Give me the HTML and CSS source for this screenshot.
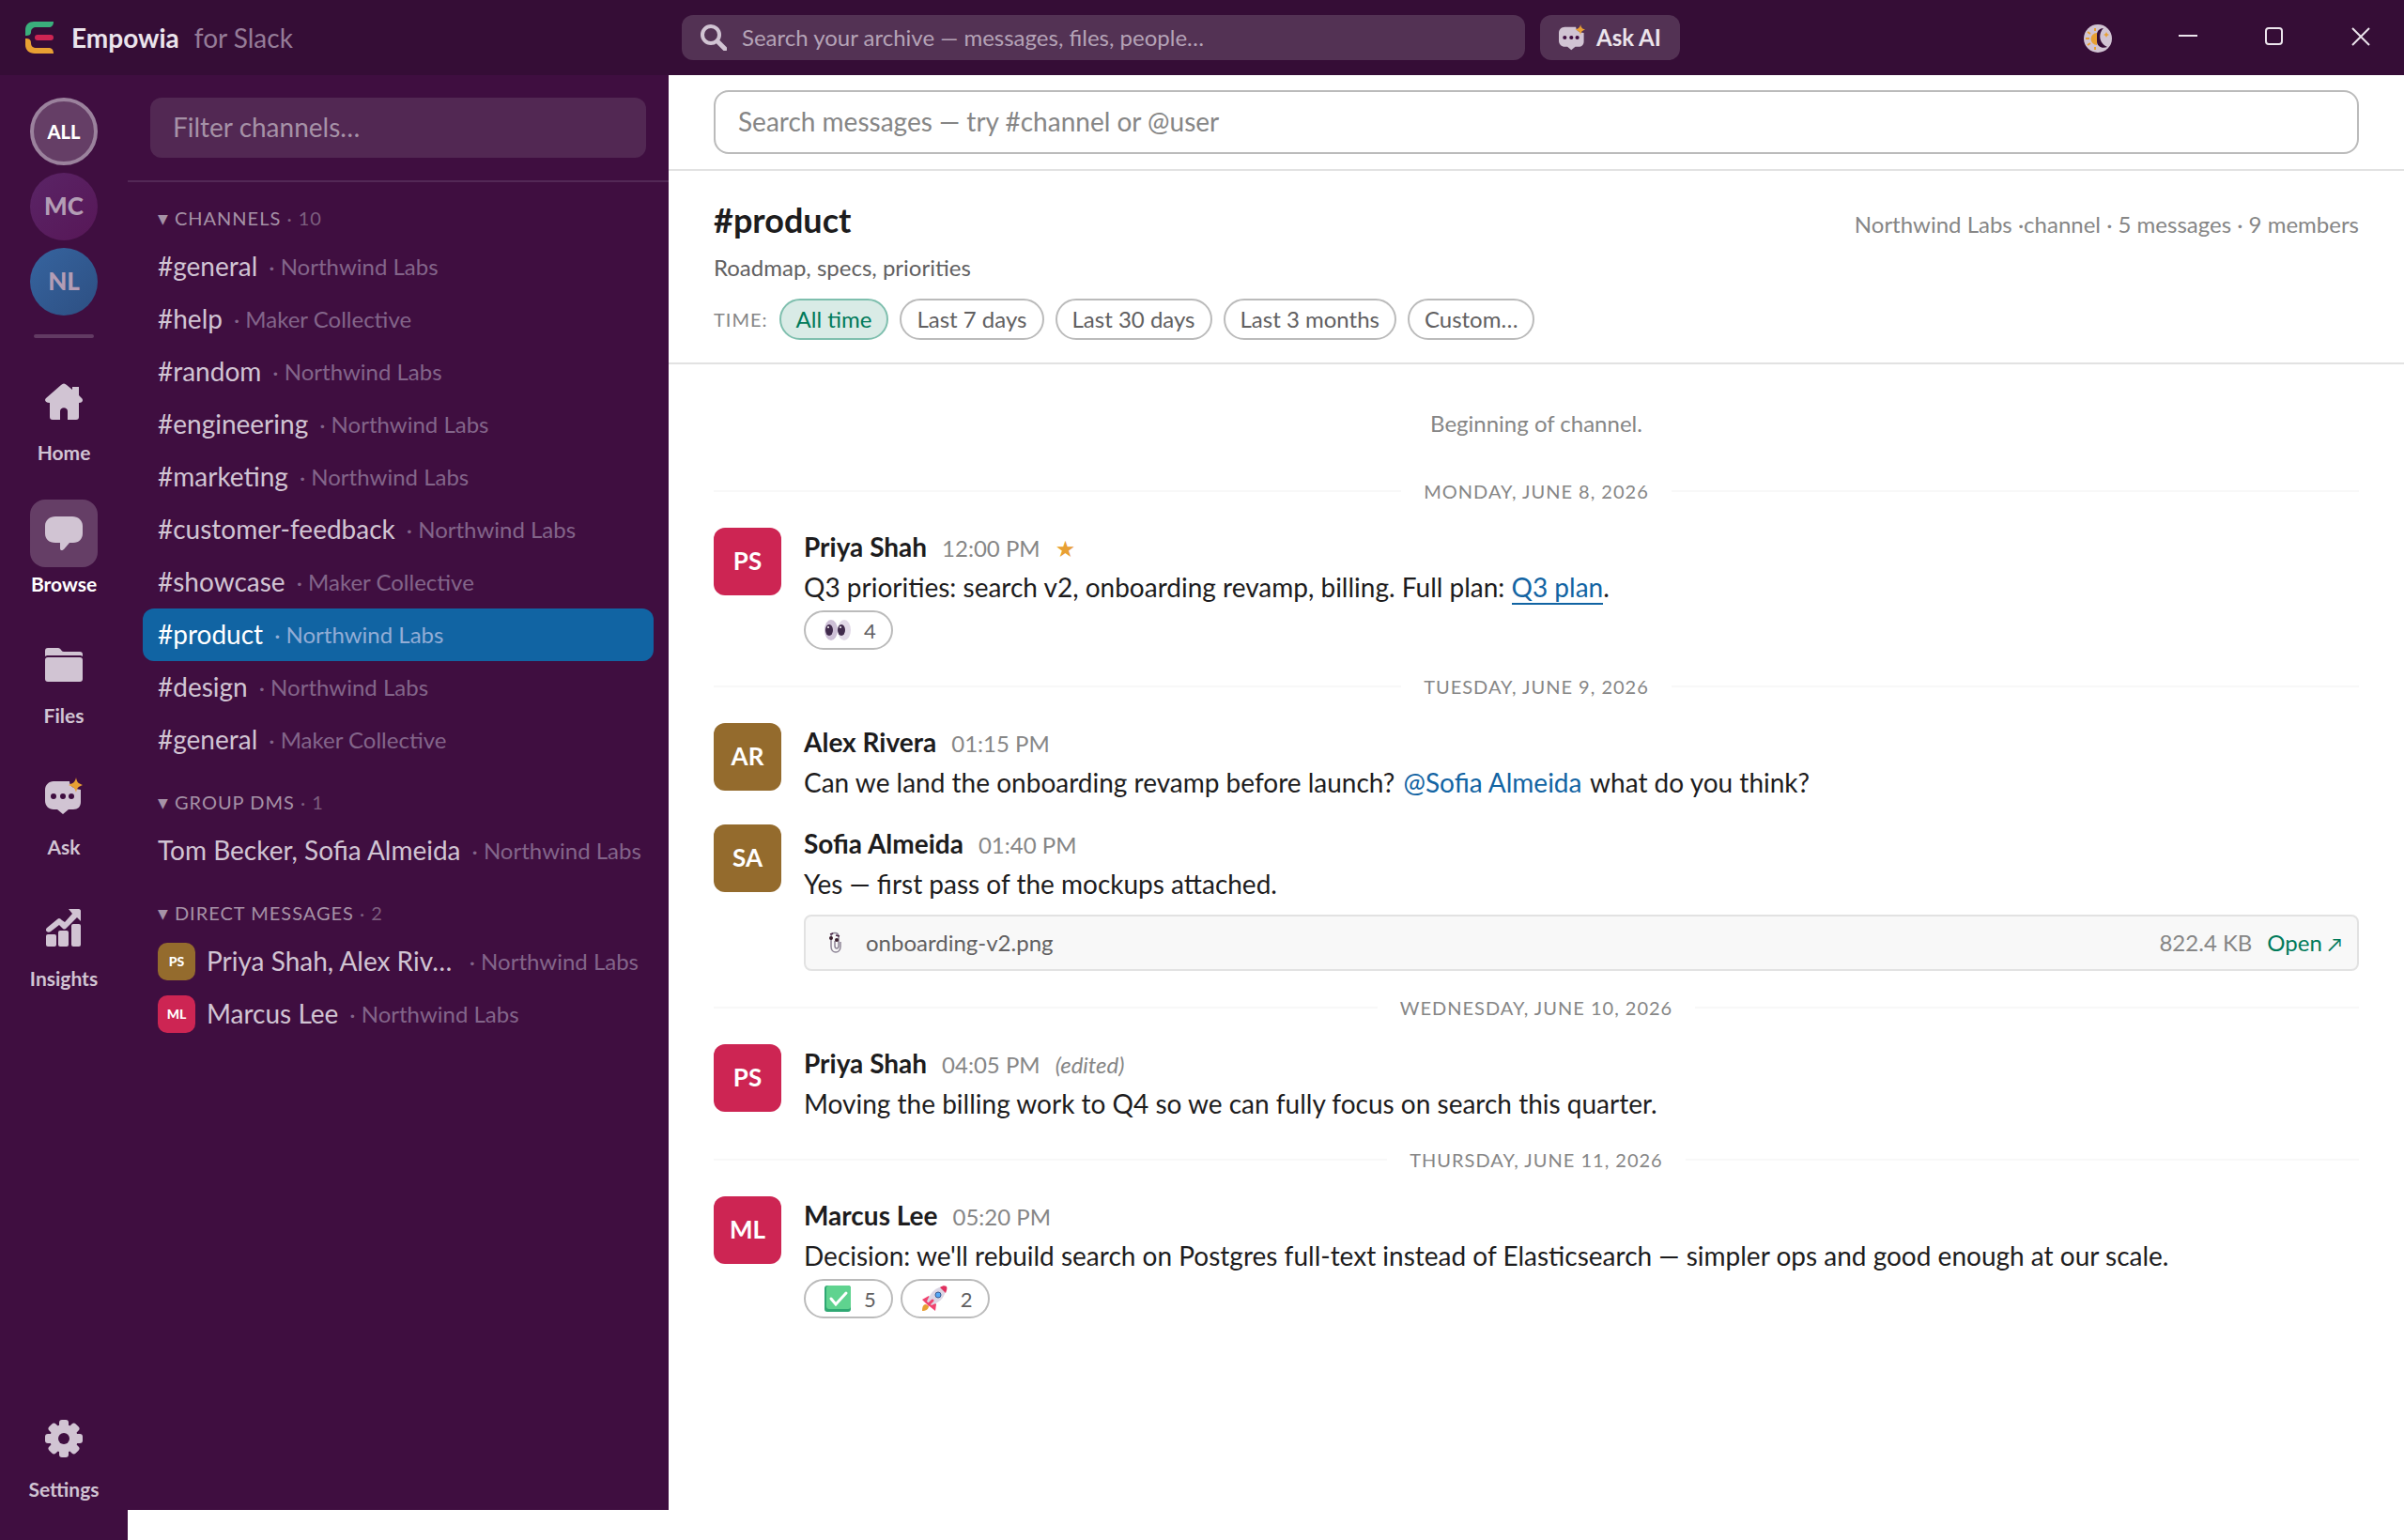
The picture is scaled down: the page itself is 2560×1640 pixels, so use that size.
FILE: index.html
```html
<!DOCTYPE html>
<html lang="en">
<head>
    <meta charset="UTF-8">
    <meta name="viewport" content="width=device-width, initial-scale=1.0">
    <title>Empowia for Slack</title>
    <link rel="stylesheet" href="styles.css">
</head>
<body>

    <!-- Shared icons -->
    <svg class="sprite" aria-hidden="true">
        <symbol id="icon-ask" viewBox="0 0 40 40">
            <path fill="currentColor" d="M9 4h17c0 5 4 8 12 9v13c0 5-3 8-8 8h-5l-6 5-6-5H9c-5 0-9-4-9-9V13c0-5 4-9 9-9z"/>
            <circle class="dot" cx="9" cy="20" r="3"/>
            <circle class="dot" cx="19" cy="20" r="3"/>
            <circle class="dot" cx="28" cy="20" r="3"/>
            <path fill="#e8a033" d="M33 0c1 5 2 6 7 8-5 2-6 3-7 8-1-5-3-6-8-8 5-2 7-3 8-8z"/>
        </symbol>
    </svg>

    <header class="titlebar">
        <div class="brand">
            <svg class="logo" viewBox="0 0 30 34" aria-hidden="true">
                <path fill="#3aaf7c" d="M0 15V9c0-6 4-9 9-9h21c0 4-2 6-5 6H12c-4 0-6 2-6 5 0 3-2 4-6 4z"/>
                <rect fill="#cd2553" x="10" y="14" width="20" height="6" rx="3"/>
                <path fill="#e8a033" d="M0 18c4 0 6 1 6 5 0 3 2 5 6 5h13c3 0 5 2 5 6H10c-6 0-10-4-10-9z"/>
            </svg>
            <strong>Empowia</strong>
            <span>for Slack</span>
        </div>
        <div class="top-actions">
            <button type="button" class="archive-search">
                <svg viewBox="0 0 28 28" aria-hidden="true">
                    <circle cx="11" cy="11" r="9" fill="none" stroke="currentColor" stroke-width="4"/>
                    <path d="M18 18l8 8" stroke="currentColor" stroke-width="5" stroke-linecap="round"/>
                </svg>
                <span>Search your archive — messages, files, people…</span>
            </button>
            <button type="button" class="ask-ai">
                <svg aria-hidden="true"><use href="#icon-ask"/></svg>
                <span>Ask AI</span>
            </button>
        </div>
        <div class="window-controls">
            <button type="button" class="theme" aria-label="Toggle theme">
                <svg viewBox="0 0 30 30">
                    <circle cx="15" cy="15" r="15" fill="#d1c4d3"/>
                    <path fill="#e8a033" d="M14 9v13a6 6 0 0 1 0-13z"/>
                    <path stroke="#e8a033" stroke-width="2" d="M12 4v3M12 24v3M2 15h4M4 8l3 2M4 22l3-2"/>
                    <path fill="#350d36" d="M21 4c-5 5-6 15 4 20-5 2-11 0-11-6V11c0-4 3-7 7-7z"/>
                    <path fill="#e8a033" d="M24 8l1 2 2 1-2 1-1 2-1-2-2-1 2-1z"/>
                </svg>
            </button>
            <button type="button" aria-label="Minimize">
                <svg viewBox="0 0 20 20"><path stroke="currentColor" stroke-width="2" d="M0 9h20"/></svg>
            </button>
            <button type="button" aria-label="Maximize">
                <svg viewBox="0 0 20 20"><rect x="1" y="1" width="17" height="17" rx="3" fill="none" stroke="currentColor" stroke-width="2"/></svg>
            </button>
            <button type="button" aria-label="Close">
                <svg viewBox="0 0 20 20"><path stroke="currentColor" stroke-width="2" d="M1 1l18 18M19 1L1 19"/></svg>
            </button>
        </div>
    </header>

    <div class="app">
        <nav class="rail">
            <button type="button" class="workspace all">ALL</button>
            <button type="button" class="workspace mc">MC</button>
            <button type="button" class="workspace nl">NL</button>
            <hr>
            <a href="#home" class="rail-item">
                <span class="rail-icon"><svg viewBox="0 0 40 40"><path fill="currentColor" d="M17 2c2-2 4-2 6 0l6 5V4h7v9l3 3c2 2 1 5-3 5v15c0 2-1 3-3 3h-9V30c0-5-8-5-8 0v9H8c-2 0-3-1-3-3V21c-5 0-6-3-4-5z"/></svg></span>
                Home
            </a>
            <a href="#browse" class="rail-item active">
                <span class="rail-icon"><svg viewBox="0 0 40 40"><path fill="currentColor" d="M11 2h18c6 0 11 4 11 10v8c0 6-4 10-10 10h-4l-6 7c-1 1-4 2-4-1v-6h-5C4 30 0 26 0 20v-8C0 6 5 2 11 2z"/></svg></span>
                Browse
            </a>
            <a href="#files" class="rail-item">
                <span class="rail-icon"><svg viewBox="0 0 40 40"><path fill="currentColor" d="M0 11V5c0-2 1-3 3-3h11c3 0 3 4 6 4h17c2 0 3 1 3 3v2c-1-1-2-1-3-1H3c-1 0-2 0-3 1z"/><path fill="currentColor" d="M3 12h34c2 0 3 1 3 3v20c0 2-1 3-3 3H3c-2 0-3-1-3-3V15c0-2 1-3 3-3z"/></svg></span>
                Files
            </a>
            <a href="#ask" class="rail-item">
                <span class="rail-icon"><svg><use href="#icon-ask"/></svg></span>
                Ask
            </a>
            <a href="#insights" class="rail-item">
                <span class="rail-icon"><svg viewBox="0 0 40 40"><g fill="currentColor"><rect x="1" y="27" width="11" height="13" rx="2"/><rect x="14" y="23" width="11" height="17" rx="2"/><rect x="28" y="16" width="10" height="24" rx="2"/><path d="M25 0h11c1 0 2 1 2 2v11l-4-4-11 11c-2 2-3 2-5 0l-3-3-9 7c-3 2-7-1-4-4L13 11c2-2 3-1 5 1l3 2 8-9z"/></g></svg></span>
                Insights
            </a>
            <a href="#settings" class="rail-item settings">
                <span class="rail-icon"><svg viewBox="0 0 40 40"><g fill="currentColor"><rect x="15" y="0" width="10" height="40" rx="3"/><rect x="15" y="0" width="10" height="40" rx="3" transform="rotate(45 20 20)"/><rect x="15" y="0" width="10" height="40" rx="3" transform="rotate(90 20 20)"/><rect x="15" y="0" width="10" height="40" rx="3" transform="rotate(135 20 20)"/><circle cx="20" cy="20" r="15"/></g><circle cx="20" cy="20" r="6" fill="#3f0e40"/></svg></span>
                Settings
            </a>
        </nav>

        <aside class="sidebar">
            <div class="filter">
                <input type="text" placeholder="Filter channels…" aria-label="Filter channels">
            </div>
            <h2><i>▼</i> Channels <small>· 10</small></h2>
            <a href="#c1" class="channel"><b>#general</b><span>· Northwind Labs</span></a>
            <a href="#c2" class="channel"><b>#help</b><span>· Maker Collective</span></a>
            <a href="#c3" class="channel"><b>#random</b><span>· Northwind Labs</span></a>
            <a href="#c4" class="channel"><b>#engineering</b><span>· Northwind Labs</span></a>
            <a href="#c5" class="channel"><b>#marketing</b><span>· Northwind Labs</span></a>
            <a href="#c6" class="channel"><b>#customer-feedback</b><span>· Northwind Labs</span></a>
            <a href="#c7" class="channel"><b>#showcase</b><span>· Maker Collective</span></a>
            <a href="#c8" class="channel selected"><b>#product</b><span>· Northwind Labs</span></a>
            <a href="#c9" class="channel"><b>#design</b><span>· Northwind Labs</span></a>
            <a href="#c10" class="channel"><b>#general</b><span>· Maker Collective</span></a>
            <h2><i>▼</i> Group DMs <small>· 1</small></h2>
            <a href="#g1" class="channel"><b>Tom Becker, Sofia Almeida</b><span>· Northwind Labs</span></a>
            <h2><i>▼</i> Direct messages <small>· 2</small></h2>
            <a href="#d1" class="channel long"><em class="mini brown">PS</em><b>Priya Shah, Alex Riv…</b><span>· Northwind Labs</span></a>
            <a href="#d2" class="channel"><em class="mini red">ML</em><b>Marcus Lee</b><span>· Northwind Labs</span></a>
        </aside>

        <main>
            <div class="message-search">
                <input type="text" placeholder="Search messages — try #channel or @user" aria-label="Search messages">
            </div>

            <section class="channel-head">
                <div class="title-row">
                    <h1>#product</h1>
                    <span>Northwind Labs ·channel · 5 messages · 9 members</span>
                </div>
                <p>Roadmap, specs, priorities</p>
                <div class="times">
                    <span>TIME:</span>
                    <button type="button" class="on">All time</button>
                    <button type="button">Last 7 days</button>
                    <button type="button">Last 30 days</button>
                    <button type="button">Last 3 months</button>
                    <button type="button">Custom…</button>
                </div>
            </section>

            <section class="messages">
                <p class="beginning">Beginning of channel.</p>

                <div class="day">Monday, June 8, 2026</div>
                <article class="message">
                    <div class="avatar red">PS</div>
                    <div class="body">
                        <div class="meta"><strong>Priya Shah</strong><time>12:00 PM</time><span class="star">★</span></div>
                        <p>Q3 priorities: search v2, onboarding revamp, billing. Full plan: <a href="#plan" class="link">Q3 plan</a>.</p>
                        <div class="reactions">
                            <button type="button">
                                <svg viewBox="0 0 28 28" aria-hidden="true"><ellipse cx="7" cy="14" rx="7" ry="11" fill="#cdbfd6"/><ellipse cx="21" cy="14" rx="7" ry="11" fill="#e2dae8"/><ellipse cx="5" cy="14" rx="4" ry="6" fill="#402a4c"/><ellipse cx="18" cy="14" rx="4" ry="6" fill="#402a4c"/><circle cx="4" cy="11" r="1" fill="#fff"/><circle cx="17" cy="11" r="1" fill="#fff"/></svg>
                                4
                            </button>
                        </div>
                    </div>
                </article>

                <div class="day">Tuesday, June 9, 2026</div>
                <article class="message">
                    <div class="avatar brown">AR</div>
                    <div class="body">
                        <div class="meta"><strong>Alex Rivera</strong><time>01:15 PM</time></div>
                        <p>Can we land the onboarding revamp before launch? <a href="#sofia" class="mention">@Sofia Almeida</a> what do you think?</p>
                    </div>
                </article>
                <article class="message">
                    <div class="avatar brown">SA</div>
                    <div class="body">
                        <div class="meta"><strong>Sofia Almeida</strong><time>01:40 PM</time></div>
                        <p>Yes — first pass of the mockups attached.</p>
                        <div class="file">
                            <svg viewBox="0 0 16 24" aria-hidden="true"><path fill="none" stroke="#8d8495" stroke-width="1.5" d="M3 6v10c0 8 10 8 10 0v-5M3 6c0-6 8-6 8 0v9c0 4-4 4-4 0v-5"/><circle cx="3" cy="7" r="2" fill="#3b1f2e"/><circle cx="9" cy="9" r="2" fill="#3b1f2e"/><path stroke="#4a2545" stroke-width="1.5" d="M2 3l3-1M8 4l4 1"/></svg>
                            <span class="file-name">onboarding-v2.png</span>
                            <span class="file-size">822.4 KB</span>
                            <a href="#open">Open <i>↗</i></a>
                        </div>
                    </div>
                </article>

                <div class="day">Wednesday, June 10, 2026</div>
                <article class="message">
                    <div class="avatar red">PS</div>
                    <div class="body">
                        <div class="meta"><strong>Priya Shah</strong><time>04:05 PM</time><em>(edited)</em></div>
                        <p>Moving the billing work to Q4 so we can fully focus on search this quarter.</p>
                    </div>
                </article>

                <div class="day">Thursday, June 11, 2026</div>
                <article class="message">
                    <div class="avatar red">ML</div>
                    <div class="body">
                        <div class="meta"><strong>Marcus Lee</strong><time>05:20 PM</time></div>
                        <p>Decision: we'll rebuild search on Postgres full-text instead of Elasticsearch — simpler ops and good enough at our scale.</p>
                        <div class="reactions">
                            <button type="button">
                                <svg viewBox="0 0 28 28" aria-hidden="true"><rect width="28" height="28" rx="3" fill="#2fa873"/><rect x="2" width="26" height="25" rx="3" fill="#5fd38f"/><path d="M7 14l5 6L23 8" fill="none" stroke="#fff" stroke-width="3" stroke-linecap="round"/></svg>
                                5
                            </button>
                            <button type="button">
                                <svg viewBox="0 0 28 28" aria-hidden="true"><path fill="#e8a033" d="M1 27c0-4 1-7 4-7l3 2c0 3-3 5-7 5z"/><path fill="#f0436f" d="M1 15l7-4 8 9-1 7-5-4-5-4z"/><path fill="#dcd6e4" d="M6 17C9 9 14 3 22 1l4 5c-2 8-7 12-15 15z"/><path fill="#e0305e" d="M20 2c3-2 5-2 7-1 1 2 0 4-1 7z"/><circle cx="18" cy="10" r="3" fill="#56a8f5" stroke="#35588f"/><path stroke="#f0436f" stroke-width="3" stroke-linecap="round" d="M8 20l4-4"/></svg>
                                2
                            </button>
                        </div>
                    </div>
                </article>
            </section>
        </main>
    </div>

</body>
</html>
```
FILE: styles.css
```css
* {
    box-sizing: border-box;
}
body {
    margin: 0;
    min-height: 100vh;
    display: flex;
    flex-direction: column;
    font-family: Lato, sans-serif;
    font-size: 28px;
    color: #1d1c1d;
    background-color: #fff;
}
button, input {
    font-family: inherit;
}
button {
    cursor: pointer;
}
a {
    text-decoration: none;
}
p, h1, h2 {
    margin: 0;
}
.sprite {
    display: none;
}

/* Title bar */
.titlebar {
    height: 80px;
    display: grid;
    grid-template-columns: 712px auto 1fr;
    align-items: center;
    background-color: #350d36;
    color: #d1c4d3;
}
.brand {
    display: flex;
    align-items: center;
    padding-left: 27px;
    color: #957c98;
}
.logo {
    width: 30px;
    height: 34px;
    margin-right: 19px;
}
.brand strong {
    margin-right: 16px;
    color: #ebe4ec;
}
.top-actions {
    display: flex;
    gap: 16px;
    padding-left: 14px;
}
.top-actions button {
    height: 48px;
    display: flex;
    align-items: center;
    border: none;
    border-radius: 12px;
    background-color: #533254;
    color: #b5a3b7;
    font-size: 24px;
}
.top-actions span {
    padding-bottom: 2px;
}
.top-actions svg {
    width: 28px;
    height: 28px;
    color: #d1c4d3;
}
.archive-search {
    width: 898px;
    gap: 16px;
    padding: 0 20px;
}
.top-actions .ask-ai {
    gap: 12px;
    padding: 0 20px;
    color: #ebe4ec;
    font-weight: bold;
}
.dot {
    fill: #3f0e40;
}
.window-controls {
    display: flex;
    justify-content: flex-end;
    align-items: center;
}
.window-controls button {
    width: 92px;
    height: 80px;
    border: none;
    padding: 0;
    background: none;
    color: #ebe4ec;
}
.window-controls svg {
    width: 20px;
    height: 20px;
}
.window-controls .theme {
    margin-right: 4px;
    padding-top: 4px;
}
.window-controls .theme svg {
    width: 30px;
    height: 30px;
}

/* Layout under the title bar */
.app {
    flex: 1;
    display: grid;
    grid-template-columns: 136px 576px 1fr;
}

/* Rail */
.rail {
    display: flex;
    flex-direction: column;
    align-items: center;
    padding: 24px 0 40px;
    background-color: #3f0e40;
}
.workspace {
    width: 72px;
    height: 72px;
    margin-bottom: 8px;
    padding: 0 0 2px;
    border: none;
    border-radius: 50%;
    color: #b39db5;
    font-size: 26px;
    font-weight: 900;
}
.workspace.all {
    padding: 0;
    border: 4px solid #9b829d;
    background-color: #653e66;
    color: #fff;
    font-size: 20px;
}
.workspace.mc {
    background: linear-gradient(135deg, #5a2466, #571757);
}
.workspace.nl {
    background: linear-gradient(135deg, #36649f, #2d4f82);
}
.rail hr {
    width: 64px;
    height: 4px;
    margin: 12px 0 32px;
    border: none;
    border-radius: 2px;
    background-color: #623a63;
}
.rail-item {
    display: flex;
    flex-direction: column;
    align-items: center;
    gap: 4px;
    margin-bottom: 36px;
    color: #d1c4d3;
    font-size: 21px;
    font-weight: bold;
    line-height: 28px;
}
.rail-icon {
    width: 72px;
    height: 72px;
    display: flex;
    align-items: center;
    justify-content: center;
    border-radius: 16px;
}
.rail-icon svg {
    width: 40px;
    height: 40px;
}
.rail-item.active {
    color: #fff;
}
.active .rail-icon {
    background-color: #653e66;
    color: #d1c4d3;
}
.rail-item.settings {
    margin: auto 0 0;
}

/* Sidebar */
.sidebar {
    margin-bottom: 32px;
    background-color: #3f0e40;
}
.filter {
    padding: 24px;
    border-bottom: 2px solid #532856;
}
.filter input {
    display: block;
    width: 100%;
    height: 64px;
    padding: 0 24px 2px;
    border: none;
    border-radius: 12px;
    background-color: #522853;
    font-size: 28px;
}
.filter input::placeholder {
    color: #a692a7;
}
.sidebar h2 {
    height: 62px;
    padding: 24px 32px 10px;
    color: #a692a7;
    font-size: 20px;
    font-weight: normal;
    line-height: 28px;
    letter-spacing: 1px;
    text-transform: uppercase;
}
.sidebar h2 i {
    font-family: "DejaVu Sans", sans-serif;
    font-size: 14px;
    font-style: normal;
    vertical-align: 2px;
}
.sidebar h2 small {
    color: #7d5f7f;
    font-size: 20px;
}
.channel {
    height: 56px;
    display: flex;
    align-items: center;
    gap: 12px;
    margin: 0 16px;
    padding: 0 16px;
    border-radius: 12px;
    color: #d1c4d3;
    white-space: nowrap;
}
.channel b {
    padding-bottom: 2px;
    font-weight: normal;
}
.channel span {
    padding-bottom: 2px;
    color: #83658a;
    font-size: 24px;
}
.channel.long span {
    margin-left: auto;
}
.channel.selected {
    background-color: #1164a3;
    color: #fff;
}
.channel.selected span {
    color: #92add6;
}
.mini {
    width: 40px;
    height: 40px;
    flex-shrink: 0;
    border-radius: 10px;
    color: #fff;
    font-size: 14px;
    font-style: normal;
    font-weight: 900;
    line-height: 40px;
    text-align: center;
}
.red {
    background-color: #cd2553;
}
.brown {
    background-color: #946b2d;
}

/* Main column */
.message-search {
    padding: 16px 48px;
    border-bottom: 2px solid #e2e2e2;
}
.message-search input {
    display: block;
    width: 100%;
    height: 68px;
    padding: 0 24px 2px;
    border: 2px solid #bbb;
    border-radius: 16px;
    font-size: 28px;
}
.message-search input::placeholder {
    color: #868686;
}
.channel-head {
    padding: 30px 48px 24px;
    border-bottom: 2px solid #e2e2e2;
}
.title-row {
    display: flex;
    justify-content: space-between;
    align-items: baseline;
    color: #868686;
    font-size: 24px;
}
.channel-head h1 {
    color: #1d1c1d;
    font-size: 36px;
    line-height: 44px;
}
.channel-head p {
    margin: 10px 0 14px;
    color: #616061;
    font-size: 24px;
    line-height: 38px;
}
.times {
    display: flex;
    align-items: center;
    gap: 12px;
}
.times span {
    color: #868686;
    font-size: 20px;
    letter-spacing: 1px;
}
.times button {
    height: 44px;
    padding: 0 16px 2px;
    border: 2px solid #bbb;
    border-radius: 22px;
    background-color: #fff;
    color: #616061;
    font-size: 24px;
}
.times .on {
    border-color: #7fbfae;
    background-color: #d9ebe6;
    color: #007a5a;
}

/* Messages */
.messages {
    padding: 48px;
}
.beginning {
    margin-bottom: 30px;
    color: #868686;
    font-size: 24px;
    line-height: 30px;
    text-align: center;
}
.day {
    display: flex;
    align-items: center;
    gap: 24px;
    padding: 16px 0;
    color: #868686;
    font-size: 20px;
    line-height: 22px;
    letter-spacing: 1px;
    text-transform: uppercase;
}
.day::before, .day::after {
    content: "";
    flex: 1;
    height: 2px;
    background-color: #f8f8f8;
}
.message {
    display: flex;
    gap: 24px;
    padding: 12px 0;
}
.avatar {
    width: 72px;
    height: 72px;
    flex-shrink: 0;
    border-radius: 12px;
    color: #fff;
    font-size: 26px;
    font-weight: bold;
    line-height: 70px;
    text-align: center;
}
.body {
    flex: 1;
    line-height: 42px;
}
.meta {
    height: 42px;
    display: flex;
    align-items: baseline;
    gap: 16px;
    color: #868686;
    font-size: 24px;
    line-height: 40px;
}
.meta strong {
    color: #1d1c1d;
    font-size: 28px;
}
.star {
    color: #e8a033;
    font-family: "DejaVu Sans", sans-serif;
}
.link {
    border-bottom: 2px solid #1164a3;
    color: #1264a3;
}
.mention {
    padding: 0 2px;
    color: #1264a3;
}
.reactions {
    display: flex;
    gap: 8px;
    margin-top: 4px;
}
.reactions button {
    height: 42px;
    display: flex;
    align-items: center;
    gap: 14px;
    padding: 0 16px 0 20px;
    border: 2px solid #bbb;
    border-radius: 21px;
    background-color: #fff;
    color: #616061;
    font-size: 22px;
}
.reactions svg {
    width: 28px;
    height: 28px;
}
.file {
    height: 60px;
    display: flex;
    align-items: center;
    gap: 16px;
    margin-top: 12px;
    padding: 0 16px 0 24px;
    border: 2px solid #e2e2e2;
    border-radius: 8px;
    background-color: #f8f8f8;
    font-size: 24px;
    line-height: 40px;
}
.file svg {
    width: 16px;
    height: 24px;
    margin-right: 8px;
}
.file-name {
    flex: 1;
    color: #616061;
}
.file-size {
    color: #868686;
}
.file a {
    color: #007a5a;
}
.file i {
    font-size: 20px;
    font-style: normal;
}
```
